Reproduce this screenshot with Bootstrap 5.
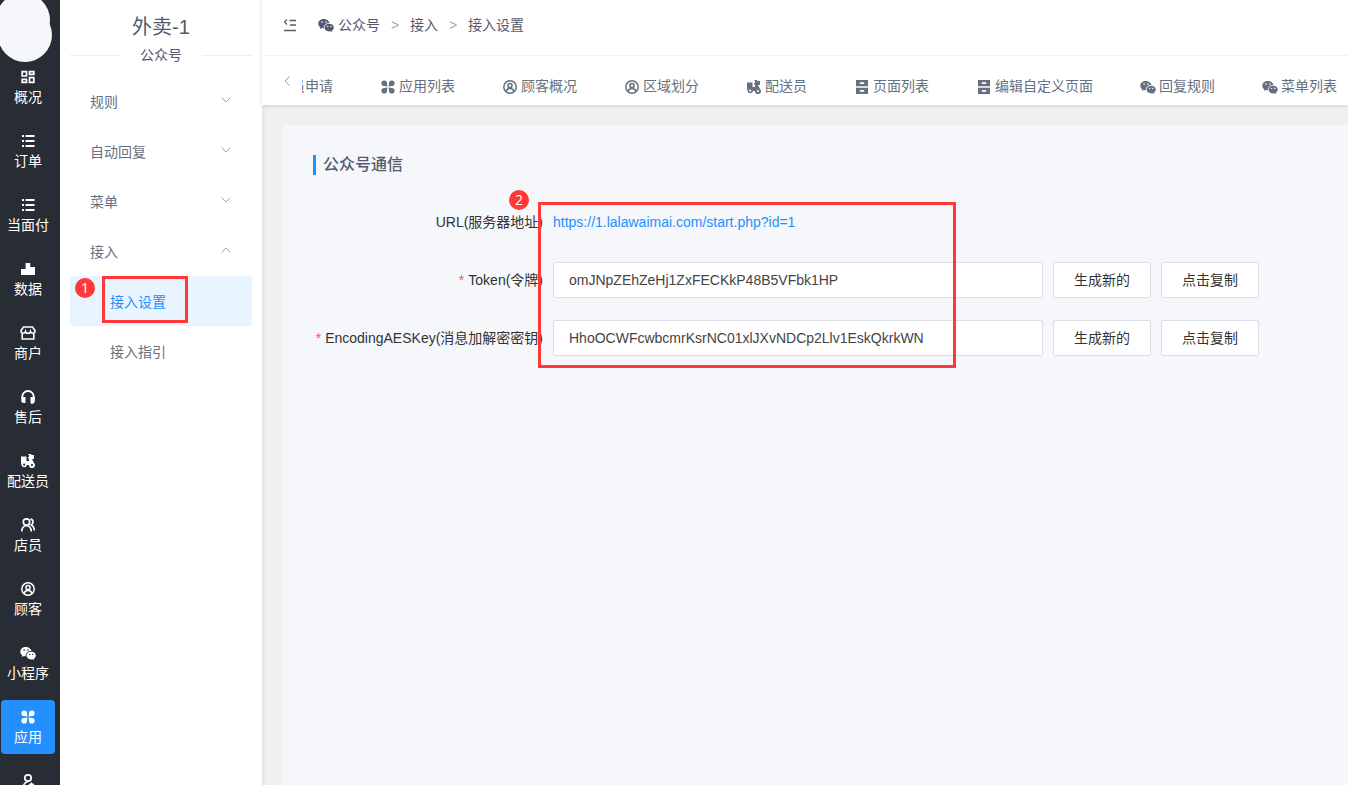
<!DOCTYPE html>
<html lang="zh-CN">
<head>
<meta charset="utf-8">
<meta name="viewport" content="width=device-width, initial-scale=1">
<title>接入设置</title>
<link href="https://cdn.jsdelivr.net/npm/bootstrap@5.3.0/dist/css/bootstrap.min.css" rel="stylesheet">
<style>
body{font:14px/20px "Liberation Sans","Noto Sans CJK SC",sans-serif;color:#515a6e;background:#f0f0f0}
a{text-decoration:none;color:inherit}
.ico{width:14px;height:14px;flex:none;fill:currentColor}
.ico-wide{width:16px}
.app-shell{height:100vh;overflow:hidden}
.rail{width:60px;background:#282c34;color:#fff;flex:none;overflow:hidden}
.rail-logo{height:60px;overflow:visible;display:block;width:60px;flex:none}
.rail-list{gap:10px;padding-left:1px}
.rail-item{width:54px;height:54px;flex:none;border-radius:4px;padding-top:10px;line-height:20px;white-space:nowrap}
.rail-item .ico{margin-bottom:3px}
.rail-item.active{background:#2490ff}
.side{width:202px;background:#fff;flex:none;padding:0 10px}
.side-title{font-size:20px;line-height:24px;padding-top:15px;height:45px}
.side-sub{height:20px;line-height:20px;margin-bottom:11px}
.side-sub i{width:50px;height:1px;background:#efefef}
.menu-row{height:50px;padding:2px 21px 0 20px;color:#657180;border:0;background:none}
.menu-row svg{width:10px;height:6px;margin-bottom:4px;fill:none;stroke:#a0a4ab}
.sub-row{height:50px;padding:2px 40px 0;color:#657180;border-radius:4px}
.sub-row.active{background:#e8f4ff;color:#2490ff}
.main-col{min-width:0}
.topbar{background:#fff;box-shadow:0 1px 5px rgba(0,0,0,.12);position:relative}
.crumbs{height:56px;padding:0 20px 6px;border-bottom:1px solid #f2f2f2}
.crumbs .fold-btn{margin-right:20px}
.crumbs .sep{color:#a4aab6;margin:0 8px;width:14px;text-align:center}
.tabs-line{height:49px;padding-left:20px}
.tab-view{overflow:hidden;margin-left:10px;padding-top:20px}
.tab-strip{gap:48px;margin-left:-57px;width:max-content;color:#657180}
.tab-strip a{gap:4px}
.tab-strip .ico{margin-top:2px}
.tab-strip .ico-wide{margin-right:-1px;margin-left:-1px}
.tab-prev{width:10px;border:0;background:none;padding:0 0 0 1px}
.body-pad{padding:20px 0 0 20px;box-shadow:inset 3px 0 4px -2px rgba(0,0,0,.08)}
.sheet{background:#f5f7fb;padding:30px 89px 0 31px}
.sheet-title{font-size:16px;line-height:20px;font-weight:500;border-left:3px solid #2490ff;padding-left:7px;margin-bottom:29px}
.form-area{position:relative}
.form-line{height:36px;margin-bottom:22px;gap:10px;color:#333}
.form-line label,.form-line .lbl{width:230px;text-align:right;white-space:nowrap;flex:none}
.form-line b{color:#ff4d4f;font-weight:400;margin-right:4px}
.form-line .form-control{height:36px;font-size:14px;border:1px solid #dcdfe6;border-radius:2px;padding:0 15px;color:#444;min-width:0}
.form-line .btn{height:36px;width:98px;flex:none;font-size:14px;line-height:20px;padding:0;background:#fff;border:1px solid #dcdfe6;border-radius:2px;color:#333}
.url-link{color:#2490ff}
.hl{position:absolute;border:3px solid #ff3838;pointer-events:none}
.hl-menu{left:32px;top:0;width:86px;height:47px}
.hl-form{left:225px;top:-2px;width:418px;height:166px}
.num{position:absolute;width:20px;height:20px;border-radius:50%;background:#ff3838;color:#fff;font:14px/20px "Open Sans","Noto Sans",sans-serif;text-align:center}
.num-menu{left:5px;top:2px}
.num-form{left:196px;top:-14px}
</style>
</head>
<body>
<svg class="d-none" aria-hidden="true">
  <symbol id="i-grid" viewBox="0 0 14 14"><path fill="none" stroke="currentColor" stroke-width="1.700" d="M1.200 1.700h4.300v4.300H1.200zM8.500 1.700h4.300v2.600H8.500zM1.200 9.300h4.300v3H1.200zM8.500 7.700h4.300v4.600H8.500z"/></symbol>
  <symbol id="i-list" viewBox="0 0 14 14"><path d="M1 1h2v2H1zM1 6h2v2H1zM1 11h2v2H1zM4.500 1H13.500v2H4.500zM4.500 6H13.500v2H4.500zM4.500 11H13.500v2H4.500z"/></symbol>
  <symbol id="i-bars" viewBox="0 0 14 14"><path d="M0 7h4.600v6H0zM4.600 1h4.600v12H4.600zM9.200 5H14v8H9.200z"/></symbol>
  <symbol id="i-shop" viewBox="0 0 16 14"><path fill="none" stroke="currentColor" stroke-width="1.600" d="M3.500 1h9L15 4.500C15 8 11.500 8 10.500 5.500 10 8 6 8 5.500 5.500 4.500 8 1 8 1 4.500zM2.200 7v6h11.600V7"/></symbol>
  <symbol id="i-head" viewBox="0 0 14 14"><path fill="none" stroke="currentColor" stroke-width="1.800" d="M1.300 8V6.500a5.700 5.500 0 0 1 11.400 0V11q0 2-2.700 2"/><path d="M.300 7H4.500v6H2.500a2.200 2.200 0 0 1-2.200-2zM9.500 7h4.200v4a2 2 0 0 1-2 2H9.500z"/></symbol>
  <symbol id="i-rider" viewBox="0 0 14 14"><path fill-rule="evenodd" d="M0 2.500h5.500V7H8V4.500H7V3h1V1L7 .5 7.500 0H10l.5 1H13v4h-2l2 4a3 3 0 1 1-5 2H6a2.800 2.800 0 0 1-5.500 0L0 8.500zM3.200 9.600a1.100 1.100 0 1 0 0 2.200 1.100 1.100 0 0 0 0-2.200zM11 9.900a1.100 1.100 0 1 0 0 2.200 1.100 1.100 0 0 0 0-2.200z"/></symbol>
  <symbol id="i-staff" viewBox="0 0 14 14"><g fill="none" stroke="currentColor" stroke-width="1.700"><circle cx="5.500" cy="4" r="3.200"/><path d="M.7 13.500C1 5.800 10 5.800 10.300 13.500M9.500 1.200c3.200.3 3.200 4.500.7 5.800 2 .8 3 2.500 3.200 5.500"/></g></symbol>
  <symbol id="i-user" viewBox="0 0 14 14"><g fill="none" stroke="currentColor" stroke-width="1.500"><circle cx="7" cy="7" r="6.200"/><circle cx="7" cy="5.500" r="2.100"/><path d="M3.300 11C4 7.500 10 7.500 10.700 11"/></g></symbol>
  <symbol id="i-wechat" viewBox="0 0 16 14"><path fill-rule="evenodd" d="M6 1C2.700 1 .3 3 .3 5.700c0 1.500.8 2.800 2 3.600L1.800 11l2-1c.8.2 1.500.3 2 .3C5.500 7 8 5 11.500 5 11 2.700 8.800 1 6 1zM4.100 3.300a.8.800 0 1 1 0 1.600.8.800 0 0 1 0-1.600zM8 3.300a.8.800 0 1 1 0 1.600.8.800 0 0 1 0-1.600z"/><path fill-rule="evenodd" d="M11.200 5.700c-2.700 0-4.700 1.700-4.700 3.900s2 3.900 4.700 3.900l1.500-.3 1.600.8-.4-1.400c1.200-.7 1.900-1.800 1.900-3 0-2.200-2-3.900-4.600-3.900zM9.700 7.700a.7.700 0 1 1 0 1.400.7.700 0 0 1 0-1.400zM12.800 7.700a.7.700 0 1 1 0 1.400.7.700 0 0 1 0-1.400z"/></symbol>
  <symbol id="i-apps" viewBox="0 0 14 14"><path d="M3.200.4a2.800 2.800 0 0 1 2.800 2.800l.4 3.200-3.200-.4a2.800 2.800 0 1 1 0-5.600zM10.800.4a2.800 2.800 0 1 1 0 5.600l-3.200.4.400-3.200A2.800 2.800 0 0 1 10.800.4zM3.200 8l3.200-.4-.4 3.200A2.800 2.800 0 1 1 3.200 8zM7.600 7.600l3.200.4A2.800 2.800 0 1 1 8 10.800z"/></symbol>
  <symbol id="i-page" viewBox="0 0 14 14"><path fill-rule="evenodd" d="M1 0h12v6.300H1zM4.800 2.300v1.700h4.400V2.300zM1 7.700h12V14H1zM4.800 10v1.700h4.400V10z"/></symbol>
  <symbol id="i-agent" viewBox="0 0 14 14"><g fill="none" stroke="currentColor" stroke-width="1.700"><circle cx="7" cy="4" r="3.200"/><path d="M2 14q0-5 5-6.500"/></g><path d="m10.500 8 1 1.600 2 .4-1.300 1.500.2 2-1.900-.8-1.900.8.200-2L7.500 10l2-.4z"/></symbol>
  <symbol id="i-fold" viewBox="0 0 14 14"><path fill="none" stroke="#5a5e66" stroke-width="1.300" d="M4 1.500 1.500 4 4 6.500M6.500 2.500H13M7 7h6M1 12.500h12"/></symbol>
</svg>

<div class="app-shell d-flex">
  <nav class="rail d-flex flex-column" aria-label="主导航">
    <svg class="rail-logo" viewBox="0 0 60 60" aria-hidden="true"><g fill="#f5f7fb"><circle cx="23" cy="20" r="27"/><circle cx="25" cy="35" r="27"/></g></svg>
    <div class="rail-list d-flex flex-column">
      <a href="#" class="rail-item d-flex flex-column align-items-center"><svg class="ico"><use href="#i-grid"/></svg>概况</a>
      <a href="#" class="rail-item d-flex flex-column align-items-center"><svg class="ico"><use href="#i-list"/></svg>订单</a>
      <a href="#" class="rail-item d-flex flex-column align-items-center"><svg class="ico"><use href="#i-list"/></svg>当面付</a>
      <a href="#" class="rail-item d-flex flex-column align-items-center"><svg class="ico"><use href="#i-bars"/></svg>数据</a>
      <a href="#" class="rail-item d-flex flex-column align-items-center"><svg class="ico ico-wide"><use href="#i-shop"/></svg>商户</a>
      <a href="#" class="rail-item d-flex flex-column align-items-center"><svg class="ico"><use href="#i-head"/></svg>售后</a>
      <a href="#" class="rail-item d-flex flex-column align-items-center"><svg class="ico"><use href="#i-rider"/></svg>配送员</a>
      <a href="#" class="rail-item d-flex flex-column align-items-center"><svg class="ico"><use href="#i-staff"/></svg>店员</a>
      <a href="#" class="rail-item d-flex flex-column align-items-center"><svg class="ico"><use href="#i-user"/></svg>顾客</a>
      <a href="#" class="rail-item d-flex flex-column align-items-center"><svg class="ico ico-wide"><use href="#i-wechat"/></svg>小程序</a>
      <a href="#" class="rail-item active d-flex flex-column align-items-center"><svg class="ico"><use href="#i-apps"/></svg>应用</a>
      <a href="#" class="rail-item d-flex flex-column align-items-center" aria-label="代理"><svg class="ico"><use href="#i-agent"/></svg></a>
    </div>
  </nav>

  <aside class="side">
    <div class="side-title text-center">外卖-1</div>
    <div class="side-sub d-flex align-items-center justify-content-between"><i></i><span>公众号</span><i></i></div>
    <button type="button" class="menu-row w-100 d-flex align-items-center justify-content-between"><span>规则</span><svg viewBox="0 0 10 6"><path d="M.5.500 5 5 9.500.5"/></svg></button>
    <button type="button" class="menu-row w-100 d-flex align-items-center justify-content-between"><span>自动回复</span><svg viewBox="0 0 10 6"><path d="M.5.500 5 5 9.500.5"/></svg></button>
    <button type="button" class="menu-row w-100 d-flex align-items-center justify-content-between"><span>菜单</span><svg viewBox="0 0 10 6"><path d="M.5.500 5 5 9.500.5"/></svg></button>
    <button type="button" class="menu-row w-100 d-flex align-items-center justify-content-between"><span>接入</span><svg viewBox="0 0 10 6"><path d="M.5 5.500 5 1 9.500 5.500"/></svg></button>
    <div class="position-relative">
      <a href="#" class="sub-row active d-flex align-items-center">接入设置</a>
      <span class="hl hl-menu"></span>
      <span class="num num-menu">1</span>
    </div>
    <a href="#" class="sub-row d-flex align-items-center">接入指引</a>
  </aside>

  <div class="main-col flex-grow-1 d-flex flex-column">
    <header class="topbar">
      <div class="crumbs d-flex align-items-center">
        <button type="button" class="fold-btn border-0 bg-transparent p-0 d-flex" aria-label="收起菜单"><svg class="ico ico-wide"><use href="#i-fold"/></svg></button>
        <a href="#" class="d-flex align-items-center gap-1"><svg class="ico ico-wide"><use href="#i-wechat"/></svg>公众号</a>
        <span class="sep">&gt;</span><a href="#">接入</a><span class="sep">&gt;</span><span>接入设置</span>
      </div>
      <div class="tabs-line d-flex">
        <button type="button" class="tab-prev d-flex align-items-center" aria-label="向左"><svg width="8" height="12" viewBox="0 0 8 12" fill="none" stroke="#909399"><path d="M6.500 1.500 2 6l4.500 4.500"/></svg></button>
        <div class="tab-view flex-grow-1">
          <nav class="tab-strip d-flex align-items-center">
            <a href="#" class="d-flex align-items-center"><svg class="ico"><use href="#i-rider"/></svg>配送员申请</a>
            <a href="#" class="d-flex align-items-center"><svg class="ico"><use href="#i-apps"/></svg>应用列表</a>
            <a href="#" class="d-flex align-items-center"><svg class="ico"><use href="#i-user"/></svg>顾客概况</a>
            <a href="#" class="d-flex align-items-center"><svg class="ico"><use href="#i-user"/></svg>区域划分</a>
            <a href="#" class="d-flex align-items-center"><svg class="ico"><use href="#i-rider"/></svg>配送员</a>
            <a href="#" class="d-flex align-items-center"><svg class="ico"><use href="#i-page"/></svg>页面列表</a>
            <a href="#" class="d-flex align-items-center"><svg class="ico"><use href="#i-page"/></svg>编辑自定义页面</a>
            <a href="#" class="d-flex align-items-center"><svg class="ico ico-wide"><use href="#i-wechat"/></svg>回复规则</a>
            <a href="#" class="d-flex align-items-center"><svg class="ico ico-wide"><use href="#i-wechat"/></svg>菜单列表</a>
          </nav>
        </div>
      </div>
    </header>

    <main class="body-pad flex-grow-1 d-flex">
      <section class="sheet flex-grow-1">
        <h1 class="sheet-title">公众号通信</h1>
        <form class="form-area">
          <div class="form-line d-flex align-items-center"><span class="lbl">URL(服务器地址)</span><a class="url-link" href="#">https://1.lalawaimai.com/start.php?id=1</a></div>
          <div class="form-line d-flex align-items-center">
            <label for="token"><b>*</b>Token(令牌)</label>
            <input id="token" class="form-control" type="text" value="omJNpZEhZeHj1ZxFECKkP48B5VFbk1HP">
            <button type="button" class="btn">生成新的</button><button type="button" class="btn">点击复制</button>
          </div>
          <div class="form-line d-flex align-items-center">
            <label for="aeskey"><b>*</b>EncodingAESKey(消息加解密密钥)</label>
            <input id="aeskey" class="form-control" type="text" value="HhoOCWFcwbcmrKsrNC01xlJXvNDCp2Llv1EskQkrkWN">
            <button type="button" class="btn">生成新的</button><button type="button" class="btn">点击复制</button>
          </div>
          <span class="hl hl-form"></span>
          <span class="num num-form">2</span>
        </form>
      </section>
    </main>
  </div>
</div>
<script src="https://cdn.jsdelivr.net/npm/bootstrap@5.3.0/dist/js/bootstrap.bundle.min.js"></script>
</body>
</html>
